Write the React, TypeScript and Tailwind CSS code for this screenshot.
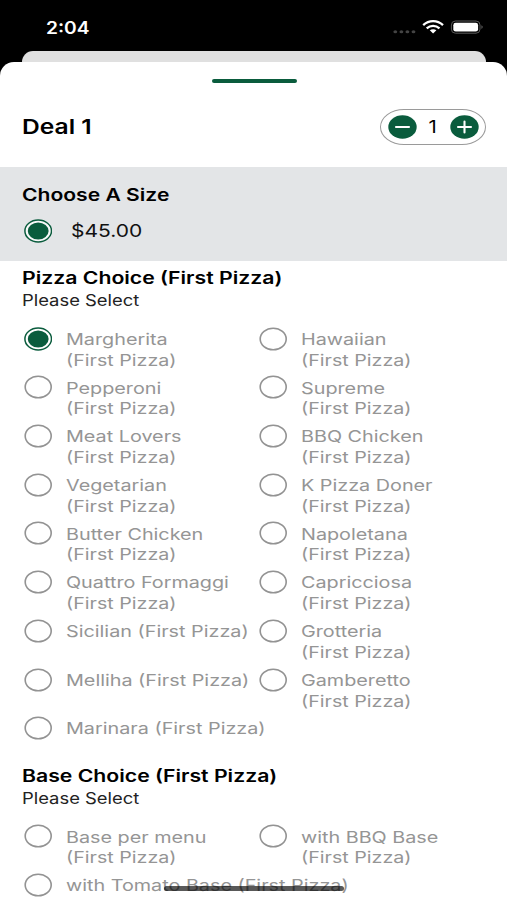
import React, { useState } from 'react';

interface Choice {
  name: string;
  suffix?: string;
}

interface TextProps {
  className?: string;
  children: React.ReactNode;
}

interface ChoiceSectionProps {
  title: string;
  rows: Choice[][];
  listClass: string;
  defaultValue?: string;
}

const SUFFIX = '(First Pizza)';

const pizzas: Choice[][] = [
  [{ name: 'Margherita', suffix: SUFFIX }, { name: 'Hawaiian', suffix: SUFFIX }],
  [{ name: 'Pepperoni', suffix: SUFFIX }, { name: 'Supreme', suffix: SUFFIX }],
  [{ name: 'Meat Lovers', suffix: SUFFIX }, { name: 'BBQ Chicken', suffix: SUFFIX }],
  [{ name: 'Vegetarian', suffix: SUFFIX }, { name: 'K Pizza Doner', suffix: SUFFIX }],
  [{ name: 'Butter Chicken', suffix: SUFFIX }, { name: 'Napoletana', suffix: SUFFIX }],
  [{ name: 'Quattro Formaggi', suffix: SUFFIX }, { name: 'Capricciosa', suffix: SUFFIX }],
  [{ name: 'Sicilian (First Pizza)' }, { name: 'Grotteria', suffix: SUFFIX }],
  [{ name: 'Melliha (First Pizza)' }, { name: 'Gamberetto', suffix: SUFFIX }],
  [{ name: 'Marinara (First Pizza)' }],
];

const bases: Choice[][] = [
  [{ name: 'Base per menu', suffix: SUFFIX }, { name: 'with BBQ Base', suffix: SUFFIX }],
  [{ name: 'with Tomato Base (First Pizza)' }],
];

// Wide text, stretched from its left edge
const Text: React.FC<TextProps> = ({ className = '', children }) => (
  <span className={`block w-max whitespace-nowrap origin-left ${className}`}>{children}</span>
);

const Radio: React.FC<{ checked?: boolean }> = ({ checked }) => (
  <svg className="w-7 h-6 shrink-0" viewBox="0 0 28 24" fill="none">
    {checked ? (
      <>
        <ellipse cx="14.2" cy="12" rx="13.3" ry="10.9" fill="#fff" fillOpacity="0.75" stroke="#0a5c3d" strokeWidth="1.5" />
        <ellipse cx="14.2" cy="12" rx="10.4" ry="8.6" fill="#0a5c3d" />
      </>
    ) : (
      <ellipse cx="14.2" cy="12" rx="13" ry="10.8" stroke="#939393" strokeWidth="1.6" />
    )}
  </svg>
);

const StatusBar: React.FC = () => (
  <div className="h-[51px] flex items-start justify-between pl-[46px] pr-[23px]">
    <Text className="mt-[17.5px] text-[17px] leading-5 font-semibold text-white scale-x-[1.13]">2:04</Text>
    <svg className="w-[92px] h-4 mt-[19px]" viewBox="0 0 92 16" fill="none">
      <g fill="#444">
        <ellipse cx="3.3" cy="12.7" rx="1.9" ry="1.5" />
        <ellipse cx="9.4" cy="12.7" rx="1.9" ry="1.5" />
        <ellipse cx="15.4" cy="12.7" rx="1.9" ry="1.5" />
        <ellipse cx="21.5" cy="12.7" rx="1.9" ry="1.5" />
      </g>
      <g stroke="#fff" strokeWidth="2.3">
        <path d="M31.2 6.1C36.9 0.7 45.3 0.7 51 6.1" />
        <path d="M34.7 9.3C38.4 6 43.8 6 47.5 9.3" />
      </g>
      <path d="M37.8 11.3C39.6 9.8 42.6 9.8 44.4 11.3L41.1 14.4Z" fill="#fff" />
      <rect x="59.4" y="2" width="28.6" height="12.2" rx="4" stroke="#5a5a5a" strokeWidth="1" />
      <rect x="61.3" y="3.8" width="24.8" height="8.8" rx="2.4" fill="#fff" />
      <path d="M89.4 6.3C91.2 7 91.2 9.2 89.4 9.9Z" fill="#5a5a5a" />
    </svg>
  </div>
);

const ChoiceItem: React.FC<{ choice: Choice; checked: boolean; onSelect: () => void }> = ({
  choice,
  checked,
  onSelect
}) => (
  <button onClick={onSelect} className="flex items-start w-[235px] shrink-0 text-left">
    <Radio checked={checked} />
    <span className="block ml-[13.5px] mt-[2.3px] text-[16px] leading-[20.7px] text-[#959595]">
      <Text className="scale-x-[1.236]">{choice.name}</Text>
      {choice.suffix && <Text className="scale-x-[1.228]">{choice.suffix}</Text>}
    </span>
  </button>
);

const ChoiceSection: React.FC<ChoiceSectionProps> = ({ title, rows, listClass, defaultValue }) => {
  const [selected, setSelected] = useState(defaultValue);

  return (
    <section>
      <h2 className="pl-[22px] text-[17px] leading-6 font-semibold text-black">
        <Text className="scale-x-[1.248]">{title}</Text>
      </h2>
      <p className="pl-[22px] text-[15.5px] leading-[22px] text-[#222]">
        <Text className="scale-x-[1.187]">Please Select</Text>
      </p>
      <div className={`pl-[24px] ${listClass}`}>
        {rows.map((row) => (
          <div key={row[0].name} className="flex h-[48.7px]">
            {row.map((choice) => (
              <ChoiceItem
                key={choice.name}
                choice={choice}
                checked={selected === choice.name}
                onSelect={() => setSelected(choice.name)}
              />
            ))}
          </div>
        ))}
      </div>
    </section>
  );
};

const Stepper: React.FC = () => {
  const [quantity, setQuantity] = useState(1);

  return (
    <div className="flex items-center justify-between w-[106px] h-9 px-[6.5px] border border-[#9a9a9a] rounded-[24px/18px]">
      <button onClick={() => setQuantity(Math.max(1, quantity - 1))}>
        <svg className="w-[29px] h-6" viewBox="0 0 29 24">
          <ellipse cx="14.5" cy="12" rx="14.2" ry="11.8" fill="#0a5c3d" />
          <path d="M8 12H21" stroke="#fff" strokeWidth="2.1" strokeLinecap="round" />
        </svg>
      </button>
      <span className="text-[17.5px] leading-6 text-black scale-x-[1.16]">{quantity}</span>
      <button onClick={() => setQuantity(quantity + 1)}>
        <svg className="w-[29px] h-6" viewBox="0 0 29 24">
          <ellipse cx="14.5" cy="12" rx="14.2" ry="11.8" fill="#0a5c3d" />
          <path d="M8 12H21M14.5 6.6V17.4" stroke="#fff" strokeWidth="2.1" strokeLinecap="round" />
        </svg>
      </button>
    </div>
  );
};

const App: React.FC = () => {
  return (
    <div className="relative flex flex-col w-[507px] h-[900px] overflow-hidden bg-black font-['Inter','Liberation_Sans',sans-serif]">
      <StatusBar />
      <div className="h-[10.5px] ml-[22px] mr-[21px] shrink-0 bg-[#e0e0e0] rounded-t-[12px]" />

      <main className="flex-1 overflow-hidden bg-white rounded-t-[14px]">
        <div className="w-[85px] h-[4.5px] mt-[17px] ml-[212px] rounded-full bg-[#0a5c3d]" />

        <header className="flex items-center justify-between h-[83.5px] pl-[22px] pr-[21px] pt-[4px]">
          <h1 className="text-[20.5px] leading-7 font-semibold text-black">
            <Text className="scale-x-[1.2]">Deal 1</Text>
          </h1>
          <Stepper />
        </header>

        {/* Size */}
        <section className="h-[94.5px] pt-[16px] bg-[#e3e5e7]">
          <h2 className="pl-[22px] text-[17px] leading-6 font-semibold text-black">
            <Text className="scale-x-[1.24]">Choose A Size</Text>
          </h2>
          <div className="flex items-center pl-[24px] mt-[12px]">
            <Radio checked />
            <span className="block ml-[19px] text-[17.5px] leading-6 text-[#111]">
              <Text className="scale-x-[1.2]">$45.00</Text>
            </span>
          </div>
        </section>

        <div className="pt-[4.5px]">
          <ChoiceSection title="Pizza Choice (First Pizza)" rows={pizzas} listClass="pt-[15.2px]" defaultValue="Margherita" />
        </div>
        <div className="-mt-[0.7px]">
          <ChoiceSection title="Base Choice (First Pizza)" rows={bases} listClass="pt-[14.2px]" />
        </div>
      </main>

      {/* Home indicator */}
      <div className="absolute left-[164px] top-[886px] w-[180px] h-[5px] rounded-full bg-black/65" />
    </div>
  );
};

export default App;
